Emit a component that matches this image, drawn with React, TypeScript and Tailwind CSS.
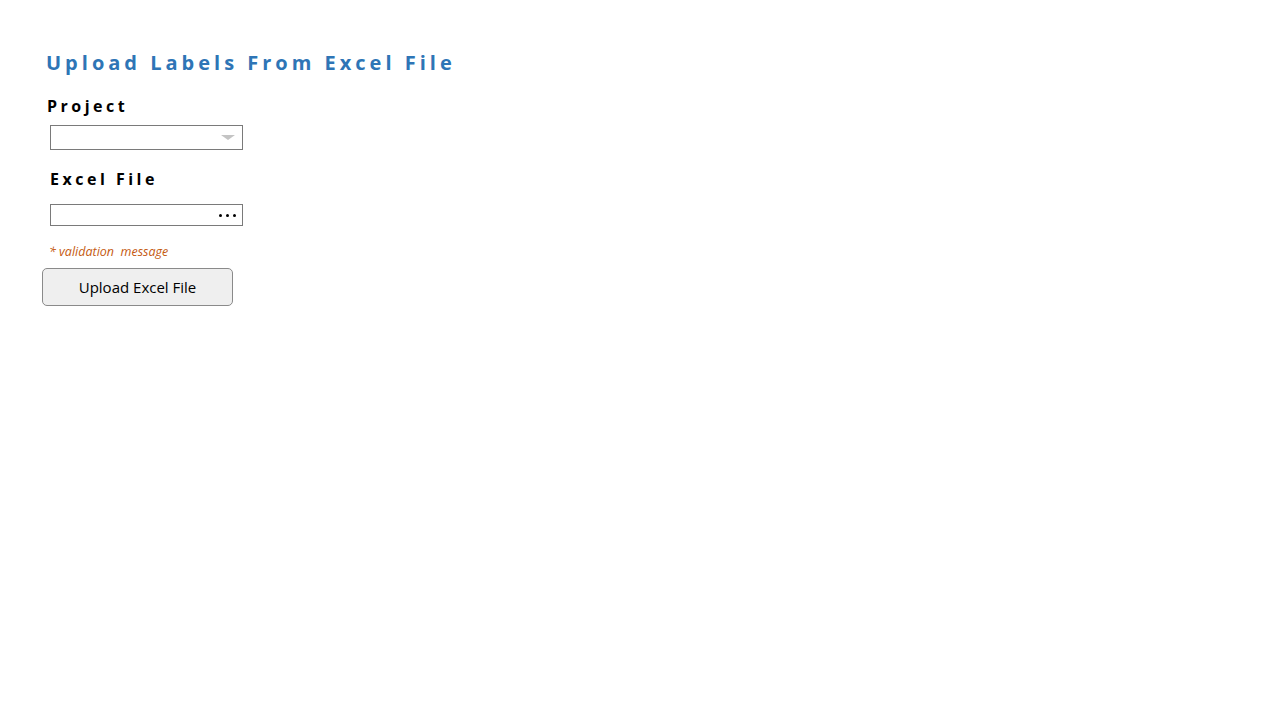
import React from "react";

export default function App() {
  return (
    <div className="w-[1280px] h-[720px] bg-white" style={{ fontFamily: '"Open Sans", "Noto Sans", sans-serif' }}>
      <div className="pl-[46px] pt-[49px] flex flex-col items-start">
        <h1 className="text-[20px] leading-[28px] font-bold tracking-[4px] text-[#2e75b6]">Upload Labels From Excel File</h1>
        <div className="mt-[19px] ml-[1px] text-[16px] leading-[20px] font-bold tracking-[3.5px] text-black">Project</div>
        <div className="mt-[9px] ml-[4px] w-[193px] h-[25px] border border-[#7a7a7a] bg-white flex items-center justify-end pr-[7px]">
          <svg width="14" height="5" viewBox="0 0 14 5"><polygon points="0,0 14,0 7,5" fill="#c4c4c4" /></svg>
        </div>
        <div className="mt-[19px] ml-[4px] text-[16px] leading-[20px] font-bold tracking-[3.5px] text-black">Excel File</div>
        <div className="mt-[15px] ml-[4px] w-[193px] h-[22px] border border-[#7a7a7a] bg-white flex items-center justify-end pr-[6px]">
          <div className="flex gap-[4px]">
            <span className="w-[3px] h-[3px] bg-black rounded-full" />
            <span className="w-[3px] h-[3px] bg-black rounded-full" />
            <span className="w-[3px] h-[3px] bg-black rounded-full" />
          </div>
        </div>
        <div className="mt-[17px] ml-[3px] text-[12.5px] leading-[18px] italic text-[#c55a11]">* validation&nbsp; message</div>
        <button className="mt-[7px] -ml-[4px] w-[191px] h-[38px] rounded-[5px] border border-[#8a8a8a] bg-[#efefef] text-[15px] text-black">Upload Excel File</button>
      </div>
    </div>
  );
}
